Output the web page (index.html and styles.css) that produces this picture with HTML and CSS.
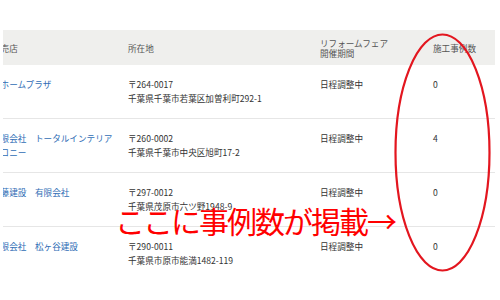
FILE: index.html
```html
<!DOCTYPE html>
<html lang="ja">
<head>
<meta charset="utf-8">
<link rel="stylesheet" href="styles.css">
</head>
<body>
<div class="wrap">
  <table class="shops">
    <colgroup>
      <col class="c1"><col class="c2"><col class="c3"><col class="c4">
    </colgroup>
    <thead>
      <tr>
        <th>販売店</th>
        <th>所在地</th>
        <th>リフォームフェア<br>開催期間</th>
        <th>施工事例数</th>
      </tr>
    </thead>
    <tbody>
      <tr>
        <td><a class="shop" href="#">㈲ホームプラザ</a></td>
        <td>〒264-0017<br>千葉県千葉市若葉区加曽利町292-1</td>
        <td>日程調整中</td>
        <td>0</td>
      </tr>
      <tr>
        <td><a class="shop" href="#">有限会社　トータルインテリア<br>エコニー</a></td>
        <td>〒260-0002<br>千葉県千葉市中央区旭町17-2</td>
        <td>日程調整中</td>
        <td>4</td>
      </tr>
      <tr>
        <td><a class="shop" href="#">佐藤建設　有限会社</a></td>
        <td>〒297-0012<br>千葉県茂原市六ツ野1948-9</td>
        <td>日程調整中</td>
        <td>0</td>
      </tr>
      <tr>
        <td><a class="shop" href="#">有限会社　松ヶ谷建設</a></td>
        <td>〒290-0011<br>千葉県市原市能満1482-119</td>
        <td>日程調整中</td>
        <td>0</td>
      </tr>
    </tbody>
  </table>
</div>
<div class="note">ここに事例数が掲載→</div>
<svg class="ring" width="500" height="300" viewBox="0 0 500 300">
  <ellipse cx="442.5" cy="152.5" rx="47" ry="118" fill="none" stroke="#e3161f" stroke-width="2.2"/>
</svg>
</body>
</html>
```

FILE: styles.css
```css
html, body {
  margin: 0;
  padding: 0;
  background: #fff;
}
body {
  width: 500px;
  height: 300px;
  overflow: hidden;
  position: relative;
  font-family: "Noto Sans CJK JP", "Noto Sans", sans-serif;
}
.wrap {
  margin: 30px 0 0 3px;
  width: 492px;
  overflow: hidden;
}
.shops {
  margin-left: -11px;
  width: 503px;
  table-layout: fixed;
  border-collapse: collapse;
  font-size: 8.6px;
  color: #333;
}
.c1 { width: 136px; }
.c2 { width: 192px; }
.c3 { width: 113px; }
.c4 { width: 62px; }
.shops th {
  height: 35px;
  padding: 0;
  background: #efefed;
  color: #555;
  font-weight: normal;
  text-align: left;
  vertical-align: middle;
  line-height: 10px;
}
.shops td {
  padding: 12px 0 13px 0;
  vertical-align: top;
  line-height: 14px;
  white-space: nowrap;
}
.shops tbody tr {
  border-bottom: 1px solid #e6e6e6;
}
.shops tbody tr:last-child {
  border-bottom: none;
}
.shop {
  color: #2f6db5;
  text-decoration: none;
}
.note {
  position: absolute;
  left: 115px;
  top: 205px;
  font-size: 30px;
  line-height: 30px;
  letter-spacing: -2px;
  color: #ff0000;
  white-space: nowrap;
}
.ring {
  position: absolute;
  left: 0;
  top: 0;
}
```
